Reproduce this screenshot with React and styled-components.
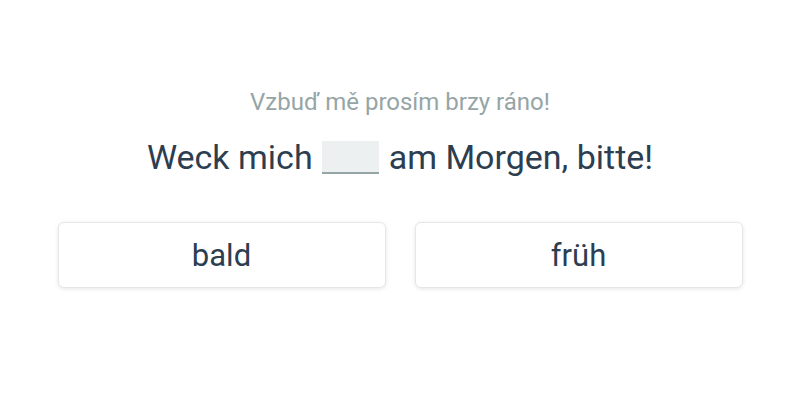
import React from 'react';
import styled, { createGlobalStyle } from 'styled-components';

const GlobalStyle = createGlobalStyle`
  html, body {
    margin: 0;
    padding: 0;
    background: #ffffff;
    font-family: Roboto, "Noto Sans", sans-serif;
  }
`

const Page = styled.div`
  width: 800px;
  height: 400px;
  box-sizing: border-box;
  padding-top: 87px;
  display: flex;
  flex-direction: column;
  align-items: center;
`

const Hint = styled.div`
  font-size: 24px;
  line-height: 30px;
  color: #95a5a6;
`

const Sentence = styled.div`
  margin-top: 18px;
  font-size: 34px;
  line-height: 44px;
  color: #2c3e50;
  display: flex;
  align-items: center;
`

const Blank = styled.span`
  display: inline-block;
  width: 57px;
  height: 31px;
  margin: 0 10px 0 9px;
  background: #ecf0f1;
  border-bottom: 2px solid #95a5a6;
`

const Options = styled.div`
  margin-top: 43px;
  display: flex;
  gap: 29px;
`

const Option = styled.button`
  width: 328px;
  height: 66px;
  box-sizing: border-box;
  background: #ffffff;
  border: 1px solid #e4e7e9;
  border-radius: 6px;
  box-shadow: 0 1px 4px rgba(0, 0, 0, 0.1);
  font-family: inherit;
  font-size: 31px;
  color: #2c3e50;
  cursor: pointer;
`

const App = () => {
  return (
    <Page>
      <GlobalStyle />
      <Hint>Vzbuď mě prosím brzy ráno!</Hint>
      <Sentence>
        Weck mich<Blank />am Morgen, bitte!
      </Sentence>
      <Options>
        <Option>bald</Option>
        <Option>früh</Option>
      </Options>
    </Page>
  );
}

export default App;
